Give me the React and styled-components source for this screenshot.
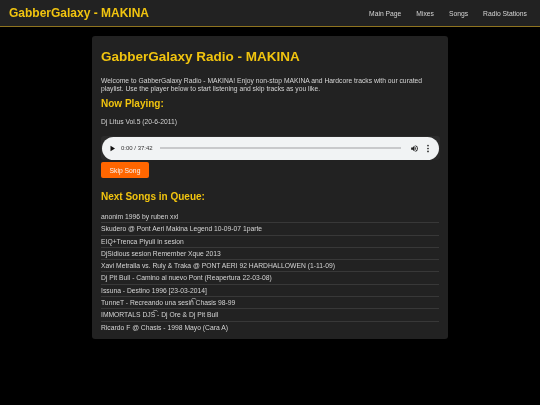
import React from "react"
import styled, { createGlobalStyle } from "styled-components"

const songs = [
  "anonim 1996 by ruben xxl",
  "Skudero @ Pont Aeri Makina Legend 10-09-07 1parte",
  "EIQ+Trenca Piyuli in sesion",
  "DjSidious sesion Remember Xque 2013",
  "Xavi Metralla vs. Ruly & Traka @ PONT AERI 92 HARDHALLOWEN (1-11-09)",
  "Dj Pit Bull - Camino al nuevo Pont (Reapertura 22-03-08)",
  "Issuna - Destino 1996 [23-03-2014]",
  "TunneT - Recreando una sesi\u00f1\u0361 Chasis 98-99",
  "IMMORTALS DJS\u0361 - Dj Ore & Dj Pit Bull",
  "Ricardo F @ Chasis - 1998 Mayo (Cara A)",
]

const links = ["Main Page", "Mixes", "Songs", "Radio Stations"]

export default function App() {
  return (
    <Page>
      <GlobalStyle />
      <Header>
        <Logo>GabberGalaxy - MAKINA</Logo>
        <Nav>
          {links.map((link) => (
            <NavLink key={link}>{link}</NavLink>
          ))}
        </Nav>
      </Header>
      <Card>
        <Title>GabberGalaxy Radio - MAKINA</Title>
        <Intro>
          Welcome to GabberGalaxy Radio - MAKINA! Enjoy non-stop MAKINA and Hardcore tracks with our curated
          playlist. Use the player below to start listening and skip tracks as you like.
        </Intro>
        <SectionTitle>Now Playing:</SectionTitle>
        <NowPlaying>Dj Litus Vol.5 (20-6-2011)</NowPlaying>
        <PlayerFrame>
          <Player>
            <svg width="7" height="7" viewBox="0 0 7 7">
              <path d="M1.5 .8v5.4L6 3.5z" fill="#111" />
            </svg>
            <Time>0:00 / 37:42</Time>
            <Track />
            <svg width="9" height="9" viewBox="0 0 24 24">
              <path d="M3 9v6h4l5 5V4L7 9H3zm13.5 3A4.5 4.5 0 0 0 14 8v8a4.5 4.5 0 0 0 2.5-4zM14 3.2v2.1a7 7 0 0 1 0 13.4v2.1a9 9 0 0 0 0-17.6z" fill="#222" />
            </svg>
            <Dots width="8" height="9" viewBox="0 0 8 9">
              <g fill="#222">
                <circle cx="4" cy="1.6" r=".85" />
                <circle cx="4" cy="4.5" r=".85" />
                <circle cx="4" cy="7.4" r=".85" />
              </g>
            </Dots>
          </Player>
        </PlayerFrame>
        <SkipButton>Skip Song</SkipButton>
        <QueueTitle>Next Songs in Queue:</QueueTitle>
        <Queue>
          {songs.map((song, i) => (
            <Song key={song} $last={i === songs.length - 1}>{song}</Song>
          ))}
        </Queue>
      </Card>
    </Page>
  )
}

const GlobalStyle = createGlobalStyle`
  html, body {
    margin: 0;
    background: #000;
    font-family: "Liberation Sans", Arial, sans-serif;
  }
`
const Page = styled.div`
  will-change: transform;
`
const Header = styled.header`
  height: 26px;
  padding: 0 13px 0 9px;
  background: #222;
  border-bottom: 1.5px solid #8f7420;
  display: flex;
  align-items: center;
  justify-content: space-between;
`
const Logo = styled.div`
  color: #f1c40f;
  font-size: 12px;
  font-weight: 700;
`
const Nav = styled.nav`
  display: flex;
  gap: 15px;
`
const NavLink = styled.a`
  color: #d4d4d4;
  font-size: 6.75px;
`
const Card = styled.main`
  width: 356px;
  box-sizing: border-box;
  margin: 9px auto 0;
  padding: 12px 9px 6px;
  background: #222;
  border-radius: 3px;
  color: #d4d4d4;
`
const Title = styled.h1`
  margin: 0 0 11px;
  color: #f1c40f;
  font-size: 13.5px;
  line-height: 18px;
`
const Intro = styled.p`
  margin: 0 0 4px;
  font-size: 6.75px;
  line-height: 8px;
`
const SectionTitle = styled.h2`
  margin: 0 0 8px;
  color: #f1c40f;
  font-size: 10px;
  line-height: 13px;
`
const NowPlaying = styled.p`
  margin: 0 0 10px;
  font-size: 6.75px;
  line-height: 8px;
`
const PlayerFrame = styled.div`
  background: #2b2b2b;
  border-radius: 3px;
  padding: 0.5px 1px;
  margin: 0 -1px 2px 0;
`
const Player = styled.div`
  height: 23px;
  border-radius: 12px;
  background: #f1f3f4;
  display: flex;
  align-items: center;
  padding: 0 7px 0 7px;
`
const Time = styled.span`
  color: #333;
  font-size: 6px;
  margin-left: 5px;
`
const Track = styled.div`
  flex: 1;
  height: 1.5px;
  margin: 0 9px 0 7px;
  background: #c8c9cb;
`
const Dots = styled.svg`
  margin-left: 5px;
`
const SkipButton = styled.button`
  display: block;
  width: 48px;
  height: 16px;
  padding: 0;
  margin: 0 0 12px;
  border: 0;
  border-radius: 2px;
  background: #ff6600;
  color: #f5f5f5;
  font-family: inherit;
  font-size: 6.75px;
`
const QueueTitle = styled(SectionTitle)`
  margin-bottom: 8px;
`
const Queue = styled.ul`
  list-style: none;
  margin: 0;
  padding: 0;
`
const Song = styled.li`
  font-size: 6.75px;
  line-height: 11.3px;
  border-bottom: ${(p) => (p.$last ? "0" : "1px solid #383838")};
`
